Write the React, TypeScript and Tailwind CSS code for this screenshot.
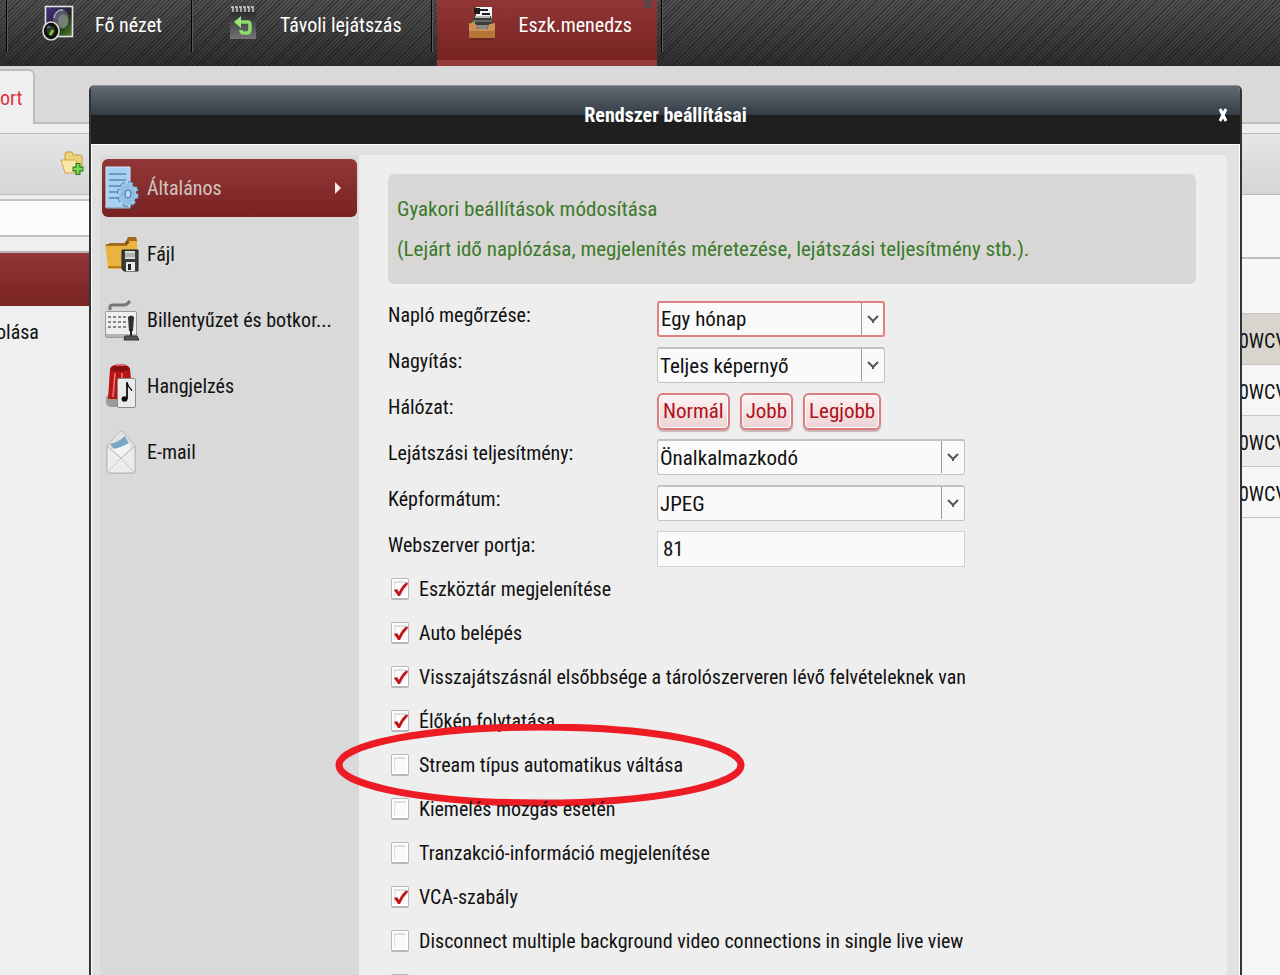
import { useState } from "react";
import type { ReactNode } from "react";

const sections = [
  { name: "Általános", icon: <GeneralIcon /> },
  { name: "Fájl", icon: <FileIcon /> },
  { name: "Billentyűzet és botkor...", icon: <KeyboardIcon /> },
  { name: "Hangjelzés", icon: <AlarmIcon /> },
  { name: "E-mail", icon: <MailIcon /> },
];

const options = [
  { label: "Eszköztár megjelenítése", on: true },
  { label: "Auto belépés", on: true },
  { label: "Visszajátszásnál elsőbbsége a tárolószerveren lévő felvételeknek van", on: true },
  { label: "Élőkép folytatása", on: true },
  { label: "Stream típus automatikus váltása", on: false, circled: true },
  { label: "Kiemelés mozgás esetén", on: false },
  { label: "Tranzakció-információ megjelenítése", on: false },
  { label: "VCA-szabály", on: true },
  { label: "Disconnect multiple background video connections in single live view", on: false },
  { label: "Auto-adjust picture size", on: false },
];

function MainViewIcon() {
  return (
    <svg width="32" height="36" viewBox="0 0 32 36">
      <defs>
        <linearGradient id="mv" x1="0" y1="0" x2="1" y2="1">
          <stop offset="0" stopColor="#4a3388" />
          <stop offset="0.45" stopColor="#2a2340" />
          <stop offset="0.6" stopColor="#20301c" />
          <stop offset="1" stopColor="#4e8a2c" />
        </linearGradient>
      </defs>
      <rect x="3.5" y="1.500" width="27" height="30" fill="url(#mv)" stroke="#e4e4e4" strokeWidth="1.6" />
      <ellipse cx="19" cy="14" rx="8" ry="10" fill="#8a8f96" opacity="0.45" />
      <ellipse cx="21" cy="16" rx="5" ry="7" fill="#9aa58f" opacity="0.5" />
      <path d="M12 13a8 10 0 0 1 9-8" stroke="#cfd3d8" fill="none" />
      <ellipse cx="9" cy="26" rx="8" ry="9" fill="#101010" stroke="#d8d8d8" strokeWidth="1.6" />
      <ellipse cx="9" cy="26" rx="4" ry="5" fill="#28401c" />
      <path d="M8 30l3-5" stroke="#86c440" strokeWidth="2.500" />
      <path d="M5 23l3-2" stroke="#6b5aa0" strokeWidth="2" />
    </svg>
  );
}

function PlaybackIcon() {
  return (
    <svg width="28" height="36" viewBox="0 0 28 36">
      <defs>
        <linearGradient id="pb" x1="0" y1="0" x2="0" y2="1">
          <stop offset="0" stopColor="#2c2c2c" />
          <stop offset="1" stopColor="#747474" />
        </linearGradient>
      </defs>
      <rect x="1" y="7" width="26" height="27" fill="url(#pb)" />
      <path d="M2 2h2v5M6 2h2v5M10 2h2v5M14 2h2v5M18 2h2v5M22 2h2v5" fill="none" stroke="#dcdcdc" strokeWidth="1.300" />
      <path d="M10 17h9q2 0 2 3v4q0 4-3 4h-4q-2 0-2-3" fill="none" stroke="#8ddc6c" strokeWidth="3.500" />
      <path d="M12 11v12l-7-6z" fill="#9be67c" />
    </svg>
  );
}

function DeviceIcon() {
  return (
    <svg width="28" height="36" viewBox="0 0 28 36">
      <rect x="8" y="2" width="16" height="12" fill="#f4f4f4" />
      <path d="M6 3h6v6H6zM12 4h8v2h-8zM14 8h8v2h-8z" fill="#1c1c1c" />
      <path d="M6 11h17l2 11H4z" fill="#3c3c3c" />
      <path d="M7 11h15v2H7z" fill="#b8b8b8" />
      <path d="M5 16h19" stroke="#909090" />
      <path d="M8 20h13l-2 4h-9z" fill="#8a8a8a" />
      <path d="M4 17l3-1v3H3z" fill="#72b233" />
      <path d="M1 18l6 1q2 0 2 5h11q0-5 2-5l5-1v14q0 1-1 1H2q-1 0-1-1z" fill="#cc9054" />
      <path d="M1 26h26v6q0 1-1 1H2q-1 0-1-1z" fill="#b47638" />
      <path d="M3 34h22" stroke="#4c1414" opacity="0.6" />
    </svg>
  );
}

function FolderAddIcon() {
  return (
    <svg width="24" height="26" viewBox="0 0 24 26">
      <path d="M5 10V3l1-2h6l1 3h8l1 1v14H8z" fill="#efd27c" stroke="#c89a3c" />
      <path d="M1 9h15l3 13H5z" fill="#fbe7a8" stroke="#d0a446" />
      <path d="M18 12v12M12.500 18h11" stroke="#2c7a1e" strokeWidth="5" />
      <path d="M18 13v10M13.500 18h9" stroke="#7ed957" strokeWidth="2.500" />
    </svg>
  );
}

function GeneralIcon() {
  return (
    <svg className="shrink-0" width="36" height="44" viewBox="0 0 36 44">
      <path d="M2 1h24v41H2z" fill="#a9d0f0" stroke="#d2e8fa" />
      <path d="M5 8h17M5 14h17M5 20h13M5 26h11M5 32h11" stroke="#5b87ae" strokeWidth="1.500" />
      <path d="M2 42h31" stroke="#2f4a66" opacity="0.6" />
      <ellipse cx="24" cy="28" rx="8.500" ry="10.500" fill="none" stroke="#3f6d9a" strokeWidth="5" strokeDasharray="4.400 3.100" />
      <ellipse cx="24" cy="28" rx="8.500" ry="10.500" fill="#8fbde4" stroke="#9cc8ec" strokeWidth="3.500" strokeDasharray="4 3.500" />
      <ellipse cx="24" cy="28" rx="7" ry="9" fill="#8fbde4" />
      <ellipse cx="24" cy="28" rx="3" ry="4" fill="#bcdcf5" stroke="#3f6d9a" />
    </svg>
  );
}

function FileIcon() {
  return (
    <svg className="shrink-0" width="36" height="36" viewBox="0 0 36 36">
      <path d="M5 7h16l3-6h8l1 3v27H5z" fill="#a66a18" />
      <path d="M22 5h10v6H20z" fill="#6b4414" />
      <path d="M1 8h21l3-3h8v26q0 2-2 2H6q-2 0-2-2z" fill="#eab23e" />
      <path d="M2 9h20l3-3" stroke="#8a5a14" fill="none" strokeWidth="1.500" />
      <path d="M4 31h20" stroke="#b98220" strokeWidth="2" />
      <path d="M18 14h16v21H20l-2-2z" fill="#3c3c3c" stroke="#1e1e1e" />
      <path d="M21 15h10v8H21z" fill="#d8d8d8" />
      <path d="M21 18h10M21 20h10" stroke="#888" />
      <path d="M22 26h9v9h-9z" fill="#e8e8e8" />
      <path d="M24 28h3v6h-3z" fill="#222" />
    </svg>
  );
}

function KeyboardIcon() {
  return (
    <svg className="shrink-0" width="36" height="42" viewBox="0 0 36 42">
      <path d="M6 11V8q0-2 3-2h11q3 0 6-4" fill="none" stroke="#777" strokeWidth="3" />
      <rect x="1.500" y="12.500" width="31" height="26" rx="1" fill="#eee" stroke="#999" />
      <path d="M2 35h30v3H2z" fill="#b4b4b4" />
      <path d="M4 18h20M4 23h20M4 28h20" stroke="#888" strokeWidth="2" strokeDasharray="3 2" />
      <path d="M24 18q3-3 6 0l-1 14h-4z" fill="#2f2f2f" />
      <path d="M26 30h2v7h-2z" fill="#222" />
      <path d="M21 37h12l2 4H20z" fill="#555" stroke="#333" />
    </svg>
  );
}

function AlarmIcon() {
  return (
    <svg className="shrink-0" width="36" height="46" viewBox="0 0 36 46">
      <path d="M2 36q0-4 3-4h20v12H7q-5-1-5-5z" fill="#9c9c9c" />
      <path d="M6 6q1-4 6-4h8q5 0 6 4l3 30H4z" fill="#b81414" />
      <path d="M6 7q1-4 6-4h8q5 0 6 4-10 3-20 0z" fill="#8a1010" />
      <path d="M12 2h9" stroke="#d46a6a" strokeWidth="2" />
      <path d="M11 10L9 34M18 10v6" stroke="#ee7a7a" strokeWidth="1.500" />
      <rect x="13.500" y="15.500" width="18" height="29" rx="1.500" fill="#ebebeb" stroke="#8a8a8a" />
      <path d="M23 20v16" stroke="#111" strokeWidth="1.800" />
      <path d="M23 19q1 5 5 9-1-4-5-5z" fill="#111" stroke="#111" />
      <ellipse cx="20.500" cy="36" rx="3" ry="2.800" fill="#111" />
    </svg>
  );
}

function MailIcon() {
  return (
    <svg className="shrink-0" width="36" height="44" viewBox="0 0 36 44">
      <path d="M3 16L15 2q2-2 4 0l12 14v25q0 2-2 2H5q-2 0-2-2z" fill="#e2e2e2" stroke="#bababa" />
      <path d="M6 14q9-2 15-8l5 10-9 12z" fill="#79a6c6" />
      <path d="M8 19q9-1 17-6l2 6-10 9z" fill="#f3f3f3" />
      <path d="M3 16l14 12 14-12v25q0 2-2 2H5q-2 0-2-2z" fill="#ececeb" stroke="#b4b4b4" />
      <path d="M4 42l13-14 13 14" fill="none" stroke="#c6c6c6" />
    </svg>
  );
}

function NavTab({ icon, active, children }: { icon: ReactNode; active?: boolean; children: ReactNode }) {
  return (
    <a
      href="#"
      className={"flex h-[50px] items-center gap-[21px] text-white " + (active ? "pr-[25px] pl-[29px]" : "pr-[29px] pl-[34px]")}
    >
      <span className="flex w-8 justify-center pb-1">{icon}</span>
      <span className="whitespace-nowrap">{children}</span>
    </a>
  );
}

function Divider() {
  return <span className="h-[52px] w-[2px] border-l border-black bg-[#5a5a5a]" />;
}

function Row({ label, id, children }: { label: string; id?: string; children: ReactNode }) {
  return (
    <div className="flex h-[46px] items-center">
      <label htmlFor={id} className="w-[269px] shrink-0 pb-2">{label}</label>
      {children}
    </div>
  );
}

function Select({ id, value, wide, focused }: { id: string; value: string; wide?: boolean; focused?: boolean }) {
  return (
    <div className={wide ? "relative w-[308px]" : "relative w-[228px]"}>
      <select
        id={id}
        className={
          "block h-9 w-full appearance-none rounded-[3px] bg-[#fafafa] pl-[2px] pr-7 text-[21px] outline-none " +
          (focused ? "border-2 border-[#e08080]" : "border border-t-2 border-[#c2c2c2]")
        }
      >
        <option>{value}</option>
      </select>
      <span className="pointer-events-none absolute inset-y-[2px] right-[2px] flex w-[22px] items-center justify-center border-l border-[#999]">
        <svg width="12" height="10" viewBox="0 0 12 10">
          <path d="M1 2l5 5 5-5M6 6v3" fill="none" stroke="#555" strokeWidth="2" />
        </svg>
      </span>
    </div>
  );
}

function QualityButton({ children }: { children: ReactNode }) {
  return (
    <button className="h-[37px] rounded-md border-2 border-[#dc7c7c] bg-linear-to-b from-[#fdf3f3] to-[#ecd3d3] px-1 text-[21px] text-[#b0101c] shadow-[inset_0_0_0_1px_#fff,0_2px_1px_#c9b4b4]">
      {children}
    </button>
  );
}

function Option({ label, on, circled }: { label: string; on: boolean; circled?: boolean }) {
  const [checked, setChecked] = useState(on);
  return (
    <div className="relative flex h-[34px] items-center">
      <label className="flex items-center gap-[10px] pl-[3px]">
        <span className="relative flex">
          <input
            type="checkbox"
            checked={checked}
            onChange={() => setChecked(!checked)}
            className="h-[22px] w-[18px] appearance-none rounded-[2px] border border-b-2 border-[#b9b9b9] bg-[#fafafa] shadow-[inset_0_0_0_2px_#fff,inset_3px_4px_1px_#ddd]"
          />
          {checked && (
            <svg className="pointer-events-none absolute inset-0" width="18" height="22" viewBox="0 0 18 22">
              <path d="M3 12l3-1 2 3q3-7 8-10l1 2q-5 5-8 12H7z" fill="#c01818" />
            </svg>
          )}
        </span>
        <span className="whitespace-nowrap">{label}</span>
      </label>
      {circled && (
        <svg className="pointer-events-none absolute -top-6 -left-[53px]" width="410" height="84" viewBox="0 0 410 84">
          <ellipse cx="205" cy="41" rx="201" ry="38" fill="none" stroke="#ed1c24" strokeWidth="7" />
        </svg>
      )}
    </div>
  );
}

function Background() {
  return (
    <div className="flex flex-1 flex-col bg-[#efefef]">
      <div className="flex h-[58px] items-end border-b-2 border-[#bdbdbd] bg-[#d9d9d9]">
        <a href="#" className="-mb-[2px] flex h-[55px] w-[35px] items-center rounded-tr-md border-t-2 border-r-2 border-[#bdbdbd] bg-[#efefef] text-[#dc2f45]">
          ort
        </a>
      </div>
      <div className="mt-[9px] flex h-[62px] items-center border-y border-[#bcbcbc] bg-linear-to-b from-[#e4e6e8] to-[#d3d5d7] pl-[60px]">
        <button aria-label="Új csoport">
          <FolderAddIcon />
        </button>
      </div>
      <div className="flex flex-1 justify-between">
        <aside className="w-[90px] pt-1">
          <input aria-label="Keresés" className="block h-[38px] w-full border-y-2 border-[#c4c4c4] bg-[#fcfcfc]" />
          <div className="mt-[14px] h-[55px] border-t-2 border-[#b4b4b4] bg-linear-to-b from-[#923636] to-[#7a2424]" />
          <div className="-ml-1 flex h-[52px] items-center">olása</div>
        </aside>
        <main className="w-[41px] overflow-hidden bg-[#f6f6f6]">
          <div className="h-16 border-b-2 border-[#bcbcbc]" />
          <table className="mt-[54px] w-full">
            <tbody>
              {[1, 2, 3, 4].map((n) => (
                <tr key={n} className="h-[51px] border-y border-[#c6c6c6] first:bg-[#d9d5ce] nth-3:bg-[#ededed]">
                  <td className="p-0 pt-1">0WCV</td>
                </tr>
              ))}
            </tbody>
          </table>
        </main>
      </div>
    </div>
  );
}

function SettingsDialog() {
  const [active, setActive] = useState(0);
  return (
    <section
      role="dialog"
      aria-labelledby="dialog-title"
      className="absolute top-[85px] right-[38px] left-[89px] overflow-hidden rounded-t-md border-x-2 border-[#333] bg-[#e1e1e1]"
    >
      <header className="relative flex h-[59px] items-center justify-center border-t border-[#8c9095] bg-linear-to-b from-[#646a73] via-[#343d47] via-50% to-[#1f1f1f] to-50% text-white">
        <h2 id="dialog-title" className="font-bold">Rendszer beállításai</h2>
        <button aria-label="Bezárás" className="absolute right-3">
          <svg width="10" height="14" viewBox="0 0 10 14">
            <path d="M2 1l6 12M8 1L2 13" stroke="#fff" strokeWidth="3" />
          </svg>
        </button>
      </header>
      <div className="flex border border-b-0 border-white pt-[10px] pr-3 pl-2">
        <nav className="flex w-[259px] shrink-0 flex-col gap-2 bg-[#d9d9d9] px-[2px] pt-1">
          {sections.map((s, i) => (
            <button
              key={s.name}
              onClick={() => setActive(i)}
              className={
                "flex h-[58px] items-center gap-[7px] rounded-md pl-[2px] text-left " +
                (i === active ? "bg-linear-to-b from-[#933838] to-[#792222] text-[#cfc4bf]" : "")
              }
            >
              {s.icon}
              <span className="flex-1 whitespace-nowrap">{s.name}</span>
              {i === active && (
                <svg className="mr-4" width="6" height="12" viewBox="0 0 6 12">
                  <path d="M0 0l6 6-6 6z" fill="#f4eaea" />
                </svg>
              )}
            </button>
          ))}
        </nav>
        <div className="flex-1 rounded-tr-md bg-[#eee] pt-[19px] pr-[31px] pb-8 pl-[29px]">
          <p className="rounded-md bg-[#d8d7d5] px-[9px] py-[15px] text-[21px] leading-10 text-[#3b7a2c]">
            Gyakori beállítások módosítása
            <br />
            (Lejárt idő naplózása, megjelenítés méretezése, lejátszási teljesítmény stb.).
          </p>
          <div className="mt-3">
            <Row label="Napló megőrzése:" id="log">
              <Select id="log" value="Egy hónap" focused />
            </Row>
            <Row label="Nagyítás:" id="zoom">
              <Select id="zoom" value="Teljes képernyő" />
            </Row>
            <Row label="Hálózat:">
              <div className="flex gap-[10px]">
                <QualityButton>Normál</QualityButton>
                <QualityButton>Jobb</QualityButton>
                <QualityButton>Legjobb</QualityButton>
              </div>
            </Row>
            <Row label="Lejátszási teljesítmény:" id="perf">
              <Select id="perf" value="Önalkalmazkodó" wide />
            </Row>
            <Row label="Képformátum:" id="format">
              <Select id="format" value="JPEG" wide />
            </Row>
            <Row label="Webszerver portja:" id="port">
              <input id="port" defaultValue="81" className="h-9 w-[308px] border border-[#cfcfcf] bg-[#fafafa] px-[5px] text-[21px]" />
            </Row>
          </div>
          <div className="flex flex-col gap-[10px]">
            {options.map((o) => (
              <Option key={o.label} {...o} />
            ))}
          </div>
        </div>
      </div>
    </section>
  );
}

export default function App() {
  return (
    <div className="relative flex h-screen flex-col overflow-hidden font-['Roboto_Condensed','Liberation_Sans',sans-serif] text-xl leading-7 text-[#111]">
      <header className="flex h-[66px] shrink-0 bg-[repeating-linear-gradient(135deg,#0000_0_2px,#0005_2px_3px),linear-gradient(#505050,#303030)] pl-[6px]">
        <Divider />
        <NavTab icon={<MainViewIcon />}>Fő nézet</NavTab>
        <Divider />
        <NavTab icon={<PlaybackIcon />}>Távoli lejátszás</NavTab>
        <Divider />
        <div className="relative ml-1 border-b-[6px] border-[#933a3a] bg-linear-to-b from-[#903636] to-[#782222]">
          <NavTab icon={<DeviceIcon />} active>Eszk.menedzs</NavTab>
          <button aria-label="Fül bezárása" className="absolute top-0 right-1">
            <svg width="10" height="8" viewBox="0 0 10 8">
              <path d="M1 8l8-9M1-1l8 9" stroke="#54484a" strokeWidth="3" />
            </svg>
          </button>
        </div>
        <span className="w-1" />
        <Divider />
      </header>
      <Background />
      <SettingsDialog />
    </div>
  );
}
